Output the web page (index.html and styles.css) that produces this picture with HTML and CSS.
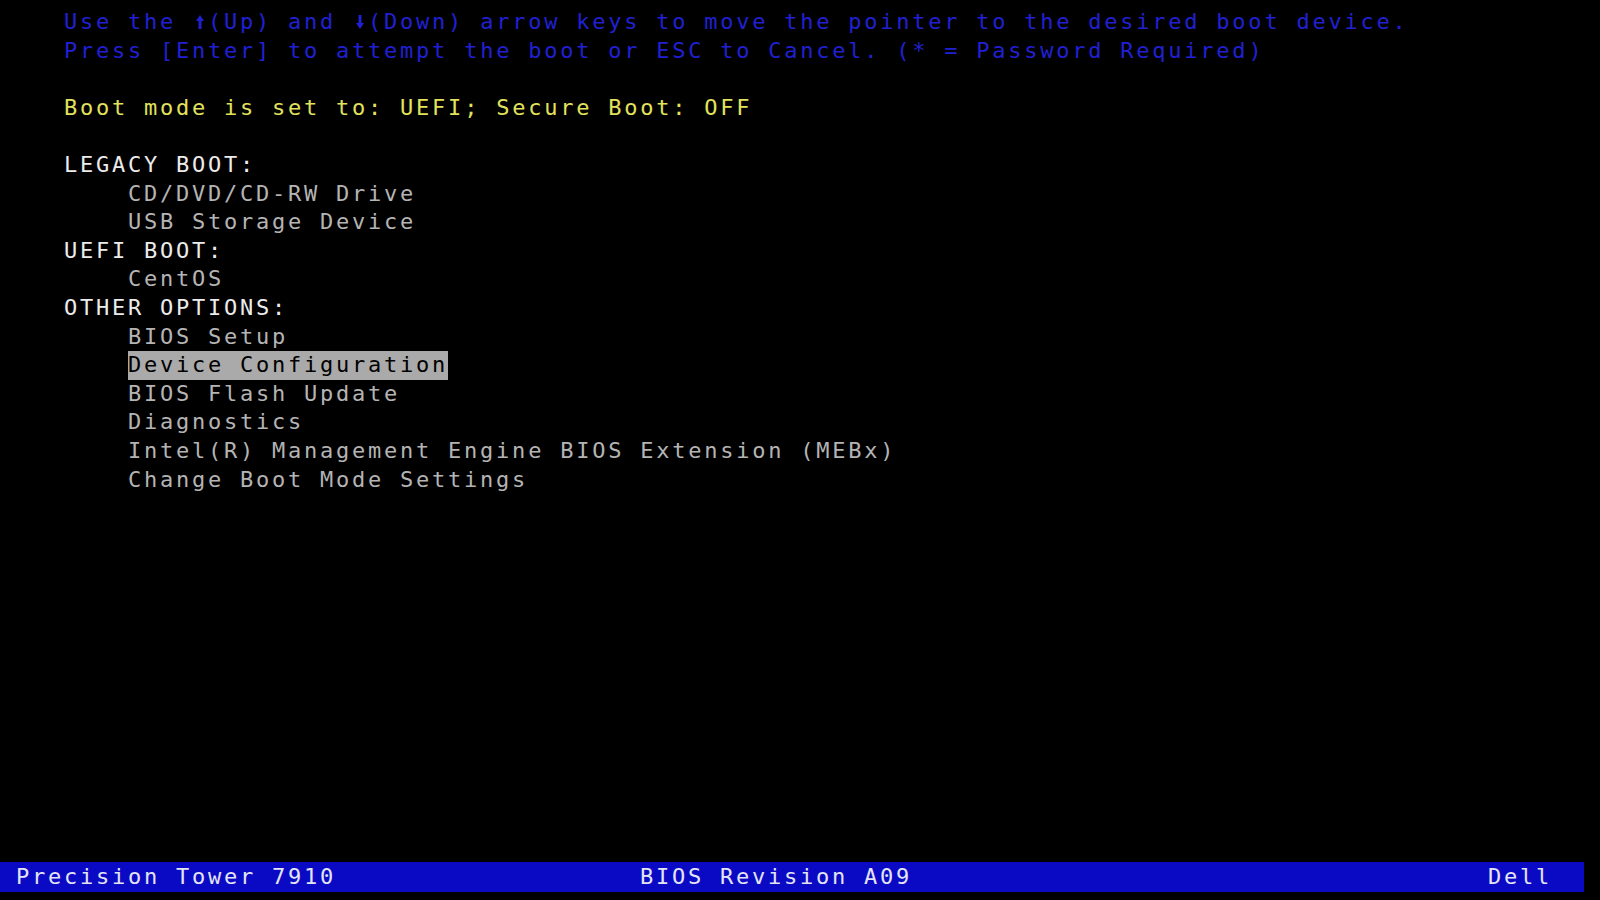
FILE: index.html
```html
<!DOCTYPE html>
<html lang="en">
<head>
    <meta charset="UTF-8">
    <title>Boot Menu</title>
    <link rel="stylesheet" href="styles.css">
</head>
<body>
    <div class="screen">
        <div class="menu">
            <!-- help text -->
            <div class="help">
                <div class="line">Use the <svg class="arrow" viewBox="0 0 10 16"><path d="M5 1 L9 7 L6.5 7 L6.5 15 L3.5 15 L3.5 7 L1 7 Z"/></svg>(Up) and <svg class="arrow" viewBox="0 0 10 16"><path d="M5 15 L9 9 L6.5 9 L6.5 1 L3.5 1 L3.5 9 L1 9 Z"/></svg>(Down) arrow keys to move the pointer to the desired boot device.</div>
                <div class="line">Press [Enter] to attempt the boot or ESC to Cancel. (* = Password Required)</div>
            </div>

            <div class="line mode">Boot mode is set to: UEFI; Secure Boot: OFF</div>

            <div class="groups">
                <div class="line heading">LEGACY BOOT:</div>
                <div class="line item">CD/DVD/CD-RW Drive</div>
                <div class="line item">USB Storage Device</div>
                <div class="line heading">UEFI BOOT:</div>
                <div class="line item">CentOS</div>
                <div class="line heading">OTHER OPTIONS:</div>
                <div class="line item">BIOS Setup</div>
                <div class="line item"><span class="selected">Device Configuration</span></div>
                <div class="line item">BIOS Flash Update</div>
                <div class="line item">Diagnostics</div>
                <div class="line item">Intel(R) Management Engine BIOS Extension (MEBx)</div>
                <div class="line item">Change Boot Mode Settings</div>
            </div>
        </div>

        <!-- status bar -->
        <div class="status-bar">
            <span class="status-left">Precision Tower 7910</span>
            <span class="status-mid">BIOS Revision A09</span>
            <span class="status-right">Dell</span>
        </div>
    </div>
</body>
</html>
```

FILE: styles.css
```css
* {
    margin: 0;
    padding: 0;
    box-sizing: border-box;
}

body {
    width: 1600px;
    height: 900px;
    background: #000;
    font-family: 'DejaVu Sans Mono', 'Liberation Mono', monospace;
    font-size: 22px;
    letter-spacing: 2.76px;
    overflow: hidden;
}

.screen {
    height: 100%;
    display: flex;
    flex-direction: column;
}

.menu {
    flex: 1;
    padding: 8px 0 0 64px;
}

.line {
    height: 28.6px;
    line-height: 28.6px;
    white-space: nowrap;
}

.help {
    color: #2020d2;
    margin-bottom: 28.6px;
}

.arrow {
    width: 10px;
    height: 16px;
    margin: 0 3px;
    fill: #2020d2;
    vertical-align: -1px;
}

.mode {
    color: #e2e25c;
    margin-bottom: 28.6px;
}

.heading {
    color: #ececec;
}

.item {
    color: #b4b4b4;
    padding-left: 64px;
}

.selected {
    display: inline-block;
    background: #aaaaaa;
    color: #000;
}

.status-bar {
    width: 1584px;
    height: 30px;
    margin-bottom: 8px;
    background: #0a0ac4;
    color: #e4e4f4;
    display: flex;
    align-items: center;
    padding: 0 32px 0 16px;
    line-height: 30px;
}

.status-left {
    width: 624px;
}

.status-mid {
    flex: 1;
}
```
